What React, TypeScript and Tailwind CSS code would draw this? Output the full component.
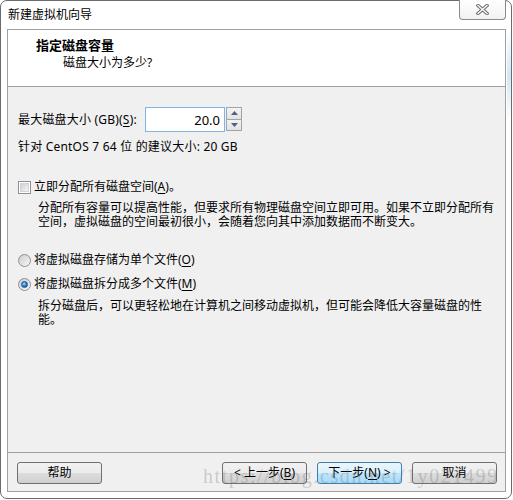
import React from "react";

const U = ({ children }: { children: React.ReactNode }) => (
  <span className="underline underline-offset-[2px] decoration-[1px]">{children}</span>
);

function Checkbox() {
  return (
    <span className="w-[13px] h-[13px] border border-[#8e8f8f] bg-white p-[1px] shrink-0 flex">
      <span className="flex-1 border border-[#d0d3d8] bg-gradient-to-br from-[#cbcfd5] to-[#f6f6f6]" />
    </span>
  );
}

function Radio({ checked }: { checked?: boolean }) {
  return (
    <span className="w-[13px] h-[13px] rounded-full border border-[#8e8f8f] bg-gradient-to-br from-[#c9ccd1] to-[#f7f7f7] shrink-0 flex items-center justify-center">
      {checked && (
        <span className="w-[7px] h-[7px] rounded-full bg-[radial-gradient(circle_at_40%_35%,#a6e0ff_0%,#2c8ad7_45%,#0d3f82_100%)] border border-[#1d4f8c]" />
      )}
    </span>
  );
}

function Btn({ children, primary }: { children: React.ReactNode; primary?: boolean }) {
  return (
    <div
      className={
        "w-[85px] h-[22px] rounded-[3px] border flex items-center justify-center text-[12px] text-black " +
        (primary
          ? "border-[#3c7fb1] bg-[linear-gradient(#eaf6fd_0%,#d9f0fc_50%,#bee6fd_50%,#a7d9f5_100%)]"
          : "border-[#707070] bg-[linear-gradient(#f2f2f2_0%,#ebebeb_50%,#dddddd_50%,#cfcfcf_100%)]")
      }
    >
      {children}
    </div>
  );
}

export default function App() {
  return (
    <div className="w-[513px] h-[500px] bg-white relative overflow-hidden font-['Noto_Sans','Noto_Sans_CJK_SC',sans-serif] text-[12px] leading-[14px] text-black">
      <div className="w-[512px] h-[499px] border border-[#6b6b6b] rounded-[7px] bg-white flex flex-col pt-[28px] pl-[6px] pr-[5px] pb-[6px] relative">
        {/* title */}
        <div className="absolute left-[7px] top-[7px] text-[12px] leading-[14px] text-black">新建虚拟机向导</div>
        {/* close */}
        <div className="absolute top-[-1px] right-[5px] w-[47px] h-[20px] border border-[#8b8b8b] border-t-0 rounded-b-[4px] bg-gradient-to-b from-[#ffffff] to-[#f2f2f2] flex items-center justify-center">
          <svg width="13" height="11" viewBox="0 0 13 11">
            <path d="M2 1.5 L11 9.5 M11 1.5 L2 9.5" stroke="#6e6e6e" strokeWidth="3.4" strokeLinecap="square" />
            <path d="M2 1.5 L11 9.5 M11 1.5 L2 9.5" stroke="#fafafa" strokeWidth="1.4" strokeLinecap="square" />
          </svg>
        </div>
        {/* right aero glow */}
        <div className="absolute right-[0px] top-[30px] w-[4px] h-[90px] bg-gradient-to-b from-transparent via-[#cfe8f7] to-transparent" />

        <div className="flex-1 border border-[#a0a0a0] flex flex-col">
          {/* header */}
          <div className="h-[57px] bg-white border-b border-[#a0a0a0] shrink-0 pl-[28px] pt-[8px]">
            <div className="font-bold text-[13px] leading-[14px]">指定磁盘容量</div>
            <div className="pl-[27px] mt-[4px] leading-[14px]">磁盘大小为多少?</div>
          </div>

          {/* content */}
          <div className="flex-1 bg-[#f0f0f0] pl-[10px] pt-[20px] relative">
            <div className="flex items-center h-[25px]">
              <span className="w-[127px] tracking-[0.2px]">
                最大磁盘大小 (GB)(<U>S</U>):
              </span>
              <div className="w-[80px] h-[25px] border border-[#7eb4ea] bg-white flex items-center justify-end pr-[4px] text-[13px]">
                20.0
              </div>
              <div className="ml-[1px] w-[16px] h-[24px] border border-[#a3a3a3] flex flex-col self-start">
                <div className="flex-1 border-b border-[#a3a3a3] bg-gradient-to-b from-[#f4f4f4] to-[#e2e2e2] flex items-center justify-center">
                  <svg width="7" height="4" viewBox="0 0 7 4"><path d="M3.5 0 L7 4 L0 4 Z" fill="#4d6185" /></svg>
                </div>
                <div className="flex-1 bg-gradient-to-b from-[#f4f4f4] to-[#e2e2e2] flex items-center justify-center">
                  <svg width="7" height="4" viewBox="0 0 7 4"><path d="M0 0 L7 0 L3.5 4 Z" fill="#4d6185" /></svg>
                </div>
              </div>
            </div>
            <div className="mt-[7px] leading-[16px] tracking-[0.2px]">针对 CentOS 7 64 位 的建议大小: 20 GB</div>

            <div className="mt-[25px] flex items-center gap-[3px]">
              <Checkbox />
              <span>
                立即分配所有磁盘空间(<U>A</U>)。
              </span>
            </div>
            <div className="pl-[20px] mt-[7px] pr-[2px] leading-[14px]">
              分配所有容量可以提高性能，但要求所有物理磁盘空间立即可用。如果不立即分配所有空间，虚拟磁盘的空间最初很小，会随着您向其中添加数据而不断变大。
            </div>

            <div className="mt-[24px] flex items-center gap-[3px]">
              <Radio />
              <span>
                将虚拟磁盘存储为单个文件(<U>O</U>)
              </span>
            </div>
            <div className="mt-[10px] flex items-center gap-[3px]">
              <Radio checked />
              <span>
                将虚拟磁盘拆分成多个文件(<U>M</U>)
              </span>
            </div>
            <div className="pl-[20px] mt-[8px] pr-[2px] leading-[14px]">
              拆分磁盘后，可以更轻松地在计算机之间移动虚拟机，但可能会降低大容量磁盘的性能。
            </div>
          </div>

          {/* footer */}
          <div className="h-[39px] shrink-0 bg-[#f0f0f0] border-t border-[#a0a0a0] flex items-start pt-[9px] pl-[9px] pr-[8px]">
            <Btn>帮助</Btn>
            <div className="flex-1" />
            <div className="flex gap-[10px]">
              <Btn>
                &lt; 上一步(<U>B</U>)
              </Btn>
              <Btn primary>
                下一步(<U>N</U>) &gt;
              </Btn>
              <Btn>取消</Btn>
            </div>
          </div>
        </div>
      </div>
      {/* watermark */}
      <div className="absolute left-[203px] top-[464px] font-['Liberation_Serif',serif] text-[20px] leading-[24px] tracking-[1.6px] text-[rgba(110,110,110,0.3)] pointer-events-none whitespace-nowrap">
        https://blog.csdn.net/1y021499
      </div>
    </div>
  );
}
